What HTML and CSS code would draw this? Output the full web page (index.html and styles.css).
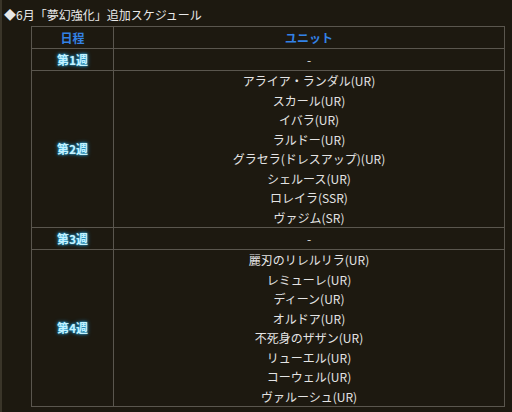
FILE: index.html
```html
<!DOCTYPE html>
<html lang="ja">
<head>
<meta charset="utf-8">
<link rel="stylesheet" href="styles.css">
</head>
<body>
<div class="page">
  <div class="title">◆6月「夢幻強化」追加スケジュール</div>
  <table class="sched">
    <tr><th class="c1">日程</th><th>ユニット</th></tr>
    <tr><td class="wk">第1週</td><td>-</td></tr>
    <tr class="multi"><td class="wk">第2週</td><td>アライア・ランダル(UR)<br>スカール(UR)<br>イバラ(UR)<br>ラルドー(UR)<br>グラセラ(ドレスアップ)(UR)<br>シェルース(UR)<br>ロレイラ(SSR)<br>ヴァジム(SR)</td></tr>
    <tr><td class="wk">第3週</td><td>-</td></tr>
    <tr class="multi"><td class="wk">第4週</td><td>麗刃のリレルリラ(UR)<br>レミューレ(UR)<br>ディーン(UR)<br>オルドア(UR)<br>不死身のザザン(UR)<br>リューエル(UR)<br>コーウェル(UR)<br>ヴァルーシュ(UR)</td></tr>
  </table>
</div>
</body>
</html>
```
FILE: styles.css
```css
html, body {
  margin: 0;
  padding: 0;
}
body {
  background: #1d1910;
  color: #e4e4e4;
  font-family: "Noto Sans CJK JP", "Noto Sans", sans-serif;
  font-size: 12px;
  width: 512px;
  height: 412px;
  overflow: hidden;
}
.page {
  border-left: 2px solid #3a3529;
  height: 412px;
  box-sizing: border-box;
  padding: 5px 0 0 2px;
}
.title {
  line-height: 20px;
  font-size: 12px;
  color: #e8e8e8;
}
.sched {
  margin: 1px 0 0 27px;
  width: 474px;
  border-collapse: collapse;
  border: 1px solid #6e6a62;
}
.sched th,
.sched td {
  border: 1px solid #5a564e;
  text-align: center;
  vertical-align: middle;
  line-height: 19.5px;
  padding: 1px 4px 0.5px;
  font-weight: normal;
}
.sched .multi td {
  padding-top: 0;
  padding-bottom: 0;
}
.sched th {
  color: #3382e6;
  font-weight: bold;
}
.sched .c1 {
  width: 73px;
}
.sched .wk {
  color: #c4f2ff;
  font-weight: bold;
  text-shadow: 0 0 2px #2fb8f0, 0 0 4px #1e90d0;
}
```
